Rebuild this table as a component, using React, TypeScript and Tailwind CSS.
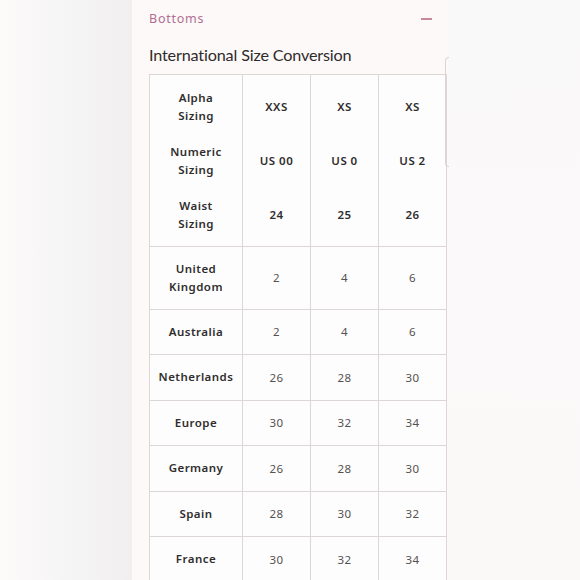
import React from "react";

const header = [
  { label: ["Alpha", "Sizing"], vals: ["XXS", "XS", "XS"] },
  { label: ["Numeric", "Sizing"], vals: ["US 00", "US 0", "US 2"] },
  { label: ["Waist", "Sizing"], vals: ["24", "25", "26"] },
];

const rows: { name: string[]; vals: string[]; h: string }[] = [
  { name: ["United", "Kingdom"], vals: ["2", "4", "6"], h: "h-[62.5px]" },
  { name: ["Australia"], vals: ["2", "4", "6"], h: "h-[45.5px]" },
  { name: ["Netherlands"], vals: ["26", "28", "30"], h: "h-[45.5px]" },
  { name: ["Europe"], vals: ["30", "32", "34"], h: "h-[45.5px]" },
  { name: ["Germany"], vals: ["26", "28", "30"], h: "h-[45.5px]" },
  { name: ["Spain"], vals: ["28", "30", "32"], h: "h-[45.5px]" },
  { name: ["France"], vals: ["30", "32", "34"], h: "h-[45.5px]" },
];

const cell = "border border-[#dcd7d5] text-center align-middle p-0";

export default function App() {
  return (
    <div className="w-[580px] h-[580px] overflow-hidden flex bg-[#f7f6f6] font-['Noto_Sans',sans-serif]">
      {/* blurred left backdrop */}
      <div className="w-[132px] shrink-0 bg-gradient-to-r from-[#fdfafa] via-[#f6f5f5] to-[#f1efef]" />

      {/* page panel */}
      <div className="relative w-[316px] shrink-0 bg-[#fdf9f8] pl-[17px]">
        <div className="flex items-center justify-between h-[38px] pr-[16px]">
          <span className="text-[12.5px] tracking-[0.06em] text-[#b06f92]">Bottoms</span>
          <span className="w-[11px] h-[1.5px] bg-[#c7879f]" />
        </div>
        <h2 className="font-['Lato',sans-serif] text-[16.2px] leading-[34px] text-[#2e2b2b] tracking-[-0.01em]">
          International Size Conversion
        </h2>

        <table className="mt-[2px] border-collapse table-fixed bg-[#fefdfd] text-[11.5px] text-[#2f2d2d]">
          <colgroup>
            <col className="w-[93px]" />
            <col className="w-[68px]" />
            <col className="w-[68px]" />
            <col className="w-[68px]" />
          </colgroup>
          <tbody>
            <tr>
              <td className={cell}>
                <div className="py-[4.5px]">
                  {header.map((h) => (
                    <div key={h.label[0]} className="h-[54px] flex flex-col items-center justify-center leading-[18px] font-semibold tracking-[0.04em]">
                      {h.label.map((l) => (
                        <span key={l}>{l}</span>
                      ))}
                    </div>
                  ))}
                </div>
              </td>
              {[0, 1, 2].map((c) => (
                <td key={c} className={cell}>
                  <div className="py-[4.5px]">
                    {header.map((h) => (
                      <div key={h.label[0]} className="h-[54px] flex items-center justify-center font-semibold tracking-[0.04em]">
                        {h.vals[c]}
                      </div>
                    ))}
                  </div>
                </td>
              ))}
            </tr>
            {rows.map((r) => (
              <tr key={r.name.join(" ")} className={r.h}>
                <td className={cell + " font-semibold tracking-[0.04em] leading-[18px]"}>
                  {r.name.map((n) => (
                    <div key={n}>{n}</div>
                  ))}
                </td>
                {r.vals.map((v, i) => (
                  <td key={i} className={cell + " text-[#555150] tracking-[0.04em]"}>
                    {v}
                  </td>
                ))}
              </tr>
            ))}
          </tbody>
        </table>

        {/* edge of the scroll container peeking on the right */}
        <div className="absolute left-[313px] top-[57px] w-[4px] h-[110px] border-l border-t border-b border-[#d9d5d3] rounded-l-[4px]" />
      </div>

      {/* blurred right backdrop */}
      <div className="flex-1 bg-gradient-to-b from-[#faf9f9] via-[#fbf9f9] to-[#fbf8f8]" />
    </div>
  );
}
